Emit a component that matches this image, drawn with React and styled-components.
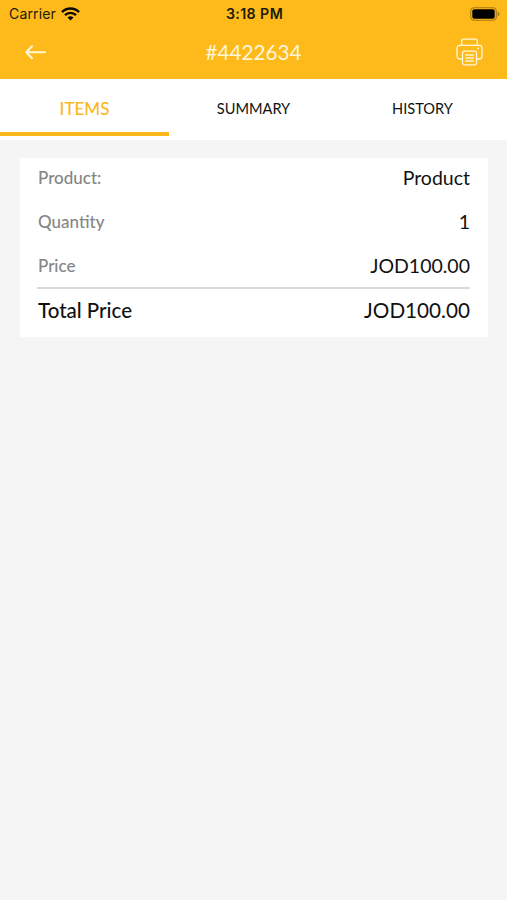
import { useState } from "react";
import styled, { createGlobalStyle } from "styled-components";

const GlobalStyle = createGlobalStyle`
  * {
    box-sizing: border-box;
  }
  body {
    margin: 0;
    background-color: #f5f5f5;
    font-family: Lato, "Liberation Sans", sans-serif;
  }
`;

const Container = styled.div`
  min-height: 100vh;
  background-color: #f5f5f5;
`;

const Header = styled.header`
  height: 79px;
  background-color: #feba1a;
`;

const StatusBar = styled.div`
  display: grid;
  grid-template-columns: 1fr auto 1fr;
  align-items: center;
  height: 27px;
  padding: 0 7px 0 9px;
  font-family: Inter, "Liberation Sans", sans-serif;
  font-size: 14px;
  color: #201a08;
`;

const Carrier = styled.div`
  display: flex;
  align-items: center;
  gap: 5px;
  letter-spacing: 0.15px;
`;

const Time = styled.span`
  font-weight: 600;
  font-size: 14.2px;
  letter-spacing: 0.4px;
`;

const BatteryIcon = styled.svg`
  justify-self: end;
`;

const NavBar = styled.div`
  display: grid;
  grid-template-columns: 1fr auto 1fr;
  align-items: center;
  height: 50px;
  padding: 0 24px;
`;

const IconButton = styled.button`
  display: flex;
  justify-self: ${(props) => props.$side};
  padding: 0;
  border: none;
  background: none;
  color: #fff6da;
  cursor: pointer;
`;

const Title = styled.h1`
  margin: 0;
  font-size: 20.7px;
  font-weight: 400;
  color: #fff6da;
`;

const Tabs = styled.nav`
  display: flex;
  height: 61px;
  background-color: white;
`;

const Tab = styled.button`
  flex: 1;
  height: 57px;
  padding: 6px 0 0;
  border: none;
  border-bottom: 4px solid ${(props) => (props.$active ? "#fbb81c" : "transparent")};
  background: none;
  font-family: inherit;
  font-size: ${(props) => (props.$active ? "17px" : "14.6px")};
  font-weight: ${(props) => (props.$active ? "500" : "400")};
  color: ${(props) => (props.$active ? "#fbb81c" : "#111")};
  cursor: pointer;
`;

const Card = styled.section`
  margin: 18px 19px 0 20px;
  padding: 0 18px;
  height: 179px;
  background-color: white;
`;

const Row = styled.div`
  display: flex;
  align-items: center;
  justify-content: space-between;
  height: 44.4px;
  &:first-child {
    height: 41px;
    padding-bottom: 3px;
  }
`;

const Label = styled.span`
  font-size: 17px;
  font-weight: 500;
  color: #858585;
`;

const Value = styled.span`
  font-size: 19.5px;
  color: #111;
`;

const Hr = styled.hr`
  margin: -1px 0 0 -1px;
  height: 2px;
  border: none;
  background-color: #d9d9d9;
`;

const TotalRow = styled(Row)`
  height: 43px;
  ${Label} {
    font-size: 20.5px;
    color: #111;
  }
  ${Value} {
    font-size: 20.7px;
  }
`;

const tabs = ["ITEMS", "SUMMARY", "HISTORY"];

const rows = [
  { label: "Product:", value: "Product" },
  { label: "Quantity", value: "1" },
  { label: "Price", value: "JOD100.00" },
];

const WifiIcon = () => (
  <svg width="19" height="14" viewBox="0 0 19 14" fill="none" stroke="#080704">
    <path d="M1 5.1a12 12 0 0 1 17 0" strokeWidth="2.5" />
    <path d="M4 8.1a7.8 7.8 0 0 1 11 0" strokeWidth="2.4" />
    <path d="M6.5 10.6a4.3 4.3 0 0 1 6 0L9.5 13.6z" fill="#080704" stroke="none" />
  </svg>
);

const ArrowIcon = () => (
  <svg
    width="22"
    height="16"
    viewBox="0 0 22 16"
    fill="none"
    stroke="currentColor"
    strokeWidth="2"
    strokeLinecap="round"
    strokeLinejoin="round"
  >
    <path d="M21 8.3H2.3M8 2.3l-5.8 6 5.8 6" />
  </svg>
);

const PrinterIcon = () => (
  <svg
    width="27"
    height="28"
    viewBox="0 0 27 28"
    fill="none"
    stroke="currentColor"
    strokeWidth="1.3"
    strokeLinejoin="round"
  >
    <path d="M5.7 7.3V3a1.8 1.8 0 0 1 1.8-1.8h12A1.8 1.8 0 0 1 21.3 3v4.3" />
    <path d="M6.5 21H3.7A2.7 2.7 0 0 1 1 18.3V10a2.7 2.7 0 0 1 2.7-2.7h19.6A2.7 2.7 0 0 1 26 10v8.3a2.7 2.7 0 0 1-2.7 2.7h-2.8" />
    <rect x="6.5" y="13.2" width="14" height="13.6" rx="1.8" />
    <path d="M9.3 17h8.4M9.3 20h8.4M9.3 23h8.4" />
    <path d="M21 10.5h2" />
  </svg>
);

const App = () => {
  const [active, setActive] = useState("ITEMS");

  return (
    <Container>
      <GlobalStyle />
      <Header>
        <StatusBar>
          <Carrier>
            Carrier <WifiIcon />
          </Carrier>
          <Time>3:18 PM</Time>
          <BatteryIcon width="30" height="14" viewBox="0 0 30 14">
            <rect x=".7" y=".7" width="25.6" height="12.6" rx="3.5" fill="none" stroke="#a87a12" strokeWidth="1.1" />
            <rect x="2.3" y="2.3" width="22.4" height="9.4" rx="2" fill="#000" />
            <path d="M27.6 4.7q2 .6 2 2.3t-2 2.3z" fill="#a87a12" />
          </BatteryIcon>
        </StatusBar>
        <NavBar>
          <IconButton $side="start" aria-label="Back">
            <ArrowIcon />
          </IconButton>
          <Title>#4422634</Title>
          <IconButton $side="end" aria-label="Print">
            <PrinterIcon />
          </IconButton>
        </NavBar>
      </Header>

      <Tabs>
        {tabs.map((tab) => (
          <Tab key={tab} $active={tab === active} onClick={() => setActive(tab)}>
            {tab}
          </Tab>
        ))}
      </Tabs>

      <Card>
        {rows.map((row) => (
          <Row key={row.label}>
            <Label>{row.label}</Label>
            <Value>{row.value}</Value>
          </Row>
        ))}
        <Hr />
        <TotalRow>
          <Label>Total Price</Label>
          <Value>JOD100.00</Value>
        </TotalRow>
      </Card>
    </Container>
  );
};

export default App;
